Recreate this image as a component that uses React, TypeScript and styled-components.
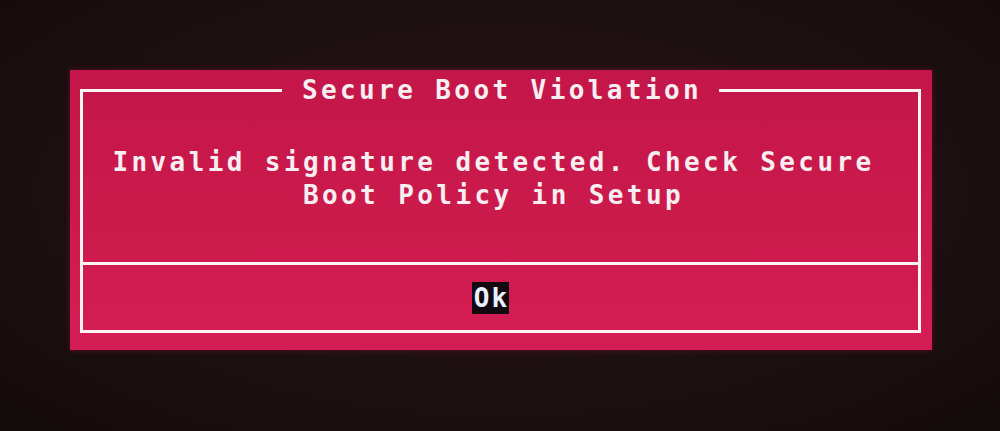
import React from "react"
import styled, { createGlobalStyle } from "styled-components"

const GlobalStyle = createGlobalStyle`
  html, body {
    margin: 0;
    padding: 0;
    background: #1c1012;
  }
`

const Screen = styled.div`
  width: 1000px;
  height: 431px;
  box-sizing: border-box;
  padding: 70px 68px 81px 70px;
  background: radial-gradient(ellipse at 50% 45%, #2a1518 0%, #1d1012 55%, #140b0d 100%);
  display: flex;
  font-family: "DejaVu Sans Mono", "Liberation Mono", monospace;
  font-weight: bold;
  font-size: 26px;
  letter-spacing: 3.4px;
  color: #f6eef0;
`

const Dialog = styled.div`
  flex: 1;
  box-sizing: border-box;
  padding: 5px 11px 17px 10px;
  background: linear-gradient(180deg, #c4164a 0%, #cc1a4c 55%, #d51d55 100%);
  box-shadow: 0 0 6px rgba(200, 20, 70, 0.35);
  display: flex;
`

const Frame = styled.fieldset`
  flex: 1;
  margin: 0;
  padding: 0;
  min-width: 0;
  border: 3px solid #fbf4f5;
  display: flex;
  flex-direction: column;
`

const Title = styled.legend`
  margin: 0 auto;
  padding: 0 17px 0 20px;
  line-height: 30px;
`

const Message = styled.div`
  height: 160px;
  box-sizing: border-box;
  padding: 41px 14px 0 0;
  text-align: center;
  line-height: 33px;
  border-bottom: 3px solid #fbf4f5;
`

const MessageLine = styled.div`
  white-space: pre;
`

const ButtonRow = styled.div`
  flex: 1;
  display: flex;
  align-items: center;
  justify-content: center;
  padding-right: 20px;
`

const OkButton = styled.span<{ selected: boolean }>`
  display: inline-block;
  height: 32px;
  line-height: 32px;
  padding: 0 0 0 2px;
  letter-spacing: 2px;
  background: ${(props) => (props.selected ? "#120a10" : "transparent")};
  color: ${(props) => (props.selected ? "#e9f1ff" : "#f6eef0")};
`

const App: React.FC = () => {
  return (
    <>
      <GlobalStyle />
      <Screen>
        <Dialog>
          <Frame>
            <Title>Secure Boot Violation</Title>
            <Message>
              <MessageLine>Invalid signature detected. Check Secure</MessageLine>
              <MessageLine>Boot Policy in Setup</MessageLine>
            </Message>
            <ButtonRow>
              <OkButton selected={true}>Ok</OkButton>
            </ButtonRow>
          </Frame>
        </Dialog>
      </Screen>
    </>
  )
}

export default App
